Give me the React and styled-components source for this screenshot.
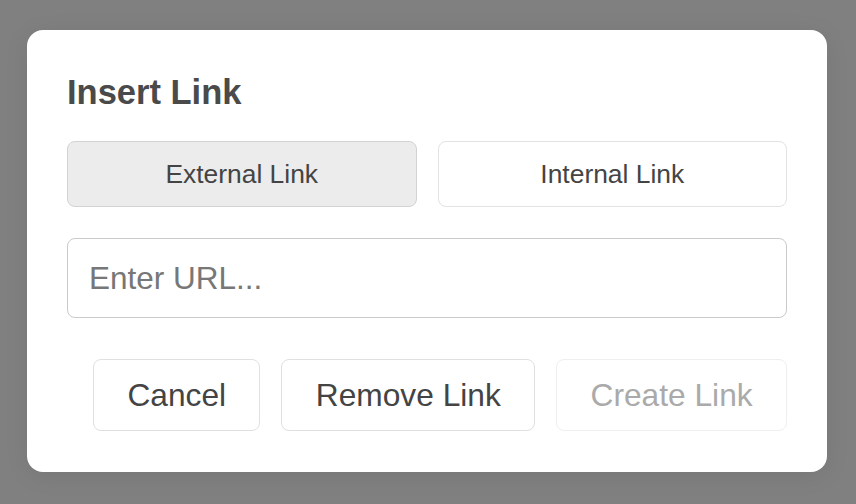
import React, { useState } from "react";
import styled, { createGlobalStyle } from "styled-components";

const Global = createGlobalStyle`
  html, body { margin: 0; padding: 0; }
  body {
    background: #808080;
    font-family: "Liberation Sans", Arial, Helvetica, sans-serif;
  }
  * { box-sizing: border-box; }
`;

const Overlay = styled.div`
  width: 100vw;
  height: 100vh;
  display: flex;
  align-items: flex-start;
  justify-content: flex-start;
  padding: 30px 0 0 27px;
  background: #808080;
`;

const Dialog = styled.div`
  width: 800px;
  background: #ffffff;
  border-radius: 16px;
  padding: 40px 40px 41px;
  box-shadow: 0 4px 24px rgba(0, 0, 0, 0.08);
  display: flex;
  flex-direction: column;
`;

const Title = styled.h2`
  margin: 0 0 27px;
  font-size: 34.5px;
  line-height: 44px;
  font-weight: 700;
  color: #4a4a4a;
`;

const ToggleRow = styled.div`
  display: grid;
  grid-template-columns: 1fr 1fr;
  gap: 21px;
  margin-bottom: 31px;
`;

const Toggle = styled.button`
  height: 66px;
  border-radius: 8px;
  border: 1.5px solid ${(p) => (p.$active ? "#d2d2d2" : "#e2e2e2")};
  background: ${(p) => (p.$active ? "#ececec" : "#ffffff")};
  color: #444444;
  font-family: inherit;
  font-size: 26.4px;
  cursor: pointer;
  padding: 0;
`;

const UrlInput = styled.input`
  height: 80px;
  width: 100%;
  border-radius: 8px;
  border: 1.5px solid #cacaca;
  padding: 0 21px;
  font-family: inherit;
  font-size: 31.5px;
  color: #444444;
  outline: none;
  margin-bottom: 41px;
  &::placeholder { color: #777777; }
`;

const Actions = styled.div`
  display: flex;
  justify-content: flex-end;
  gap: 21px;
`;

const ActionButton = styled.button`
  height: 72px;
  padding: 0 33.4px;
  border-radius: 8px;
  border: 1.5px solid ${(p) => (p.disabled ? "#efefef" : "#e0e0e0")};
  background: #ffffff;
  color: ${(p) => (p.disabled ? "#aaaaaa" : "#444444")};
  font-family: inherit;
  font-size: 31.7px;
  cursor: ${(p) => (p.disabled ? "default" : "pointer")};
`;

export default function App() {
  const [mode, setMode] = useState("external");
  const [url, setUrl] = useState("");
  return (
    <>
      <Global />
      <Overlay>
        <Dialog>
          <Title>Insert Link</Title>
          <ToggleRow>
            <Toggle $active={mode === "external"} onClick={() => setMode("external")}>
              External Link
            </Toggle>
            <Toggle $active={mode === "internal"} onClick={() => setMode("internal")}>
              Internal Link
            </Toggle>
          </ToggleRow>
          <UrlInput
            placeholder="Enter URL..."
            value={url}
            onChange={(e) => setUrl(e.target.value)}
          />
          <Actions>
            <ActionButton>Cancel</ActionButton>
            <ActionButton>Remove Link</ActionButton>
            <ActionButton disabled={!url}>Create Link</ActionButton>
          </Actions>
        </Dialog>
      </Overlay>
    </>
  );
}
